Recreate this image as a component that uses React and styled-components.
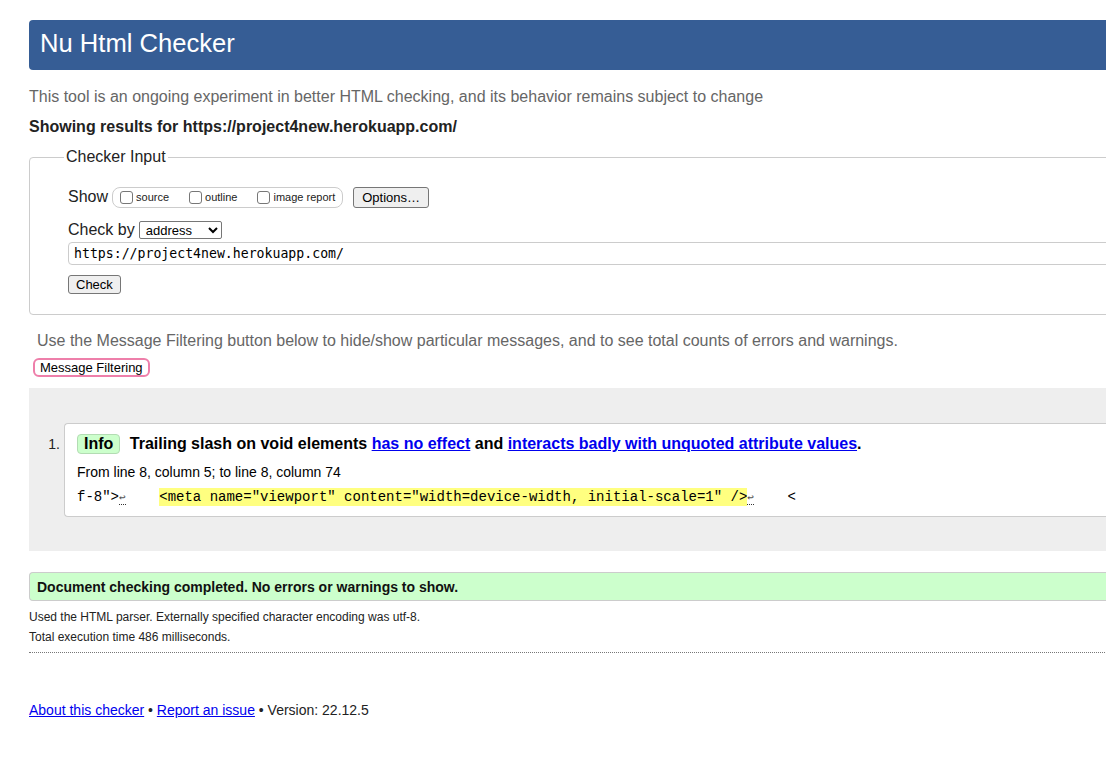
import React from 'react';
import styled, { createGlobalStyle } from 'styled-components';

const GlobalStyle = createGlobalStyle`
  html, body {
    margin: 0;
    overflow: hidden;
    background: #fff;
  }
  body {
    font-family: "Liberation Sans", Arial, sans-serif;
    color: #222;
  }
`;

const Page = styled.div`
  width: 1180px;
  padding: 20px 0 40px 29px;
`;

const Header = styled.h1`
  margin: 0;
  height: 50px;
  line-height: 46px;
  padding-left: 11px;
  background: #365d95;
  color: #fff;
  font-size: 25.6px;
  font-weight: normal;
  border-radius: 4px;
`;

const Intro = styled.p`
  margin: 18px 0 0;
  font-size: 16px;
  line-height: 18px;
  color: #666;
`;

const Target = styled.p`
  margin: 12px 0 0;
  font-size: 16px;
  line-height: 18px;
  font-weight: bold;
  color: #222;
`;

const Fieldset = styled.fieldset`
  margin: 12px 0 0;
  padding: 0 0 20px 38px;
  border: 1px solid #ccc;
  border-radius: 4px;
  min-width: 0;
`;

const Legend = styled.legend`
  padding: 0 2px;
  margin-left: -4px;
  font-size: 16px;
  line-height: 18px;
  color: #222;
`;

const Row = styled.div`
  display: flex;
  align-items: center;
  height: ${({ $h }) => $h}px;
  margin-top: ${({ $mt }) => $mt}px;
  font-size: 16px;
`;

const Group = styled.div`
  display: flex;
  align-items: center;
  box-sizing: border-box;
  height: 21px;
  margin-left: 4px;
  padding: 0 7px 0 7px;
  border: 1px solid #ccc;
  border-radius: 8px;
`;

const Option = styled.label`
  display: flex;
  align-items: center;
  font-size: 11px;
  color: #222;
  & + & {
    margin-left: 20px;
  }
`;

const Box = styled.span`
  display: inline-block;
  box-sizing: border-box;
  width: 13px;
  height: 13px;
  margin-right: 3px;
  border: 1px solid #777;
  border-radius: 3px;
  background: #fff;
`;

const Button = styled.button`
  box-sizing: border-box;
  height: ${({ $h }) => $h || 21}px;
  margin-left: ${({ $ml }) => $ml || 0}px;
  padding: 0 ${({ $px }) => $px || 6}px;
  font-family: "Liberation Sans", Arial, sans-serif;
  font-size: 13px;
  color: #000;
  background: #efefef;
  border: 1px solid #767676;
  border-radius: 3px;
`;

const Select = styled.select`
  box-sizing: border-box;
  width: 83px;
  height: 18px;
  margin-left: 4px;
  padding: 0 0 0 2px;
  font-family: "Liberation Sans", Arial, sans-serif;
  font-size: 13px;
  color: #000;
  background: #fff;
  border: 1px solid #767676;
  border-radius: 2px;
`;

const UrlInput = styled.input`
  display: block;
  box-sizing: border-box;
  width: 1100px;
  height: 23px;
  margin-top: 3px;
  padding: 0 5px;
  font-family: "DejaVu Sans Mono", monospace;
  font-size: 13.2px;
  color: #000;
  border: 1px solid #ccc;
  border-radius: 4px;
  outline: none;
`;

const FilterNote = styled.p`
  margin: 17px 0 0;
  padding-left: 8px;
  font-size: 16px;
  line-height: 18px;
  color: #666;
`;

const FilterButton = styled.button`
  display: block;
  box-sizing: border-box;
  height: 19px;
  margin: 8px 0 0 4px;
  padding: 0 5px;
  font-family: "Liberation Sans", Arial, sans-serif;
  font-size: 13px;
  color: #000;
  background: #fff;
  border: 2px solid #ee7faa;
  border-radius: 6px;
`;

const Results = styled.ol`
  margin: 11px 0 0;
  padding: 35px 0 34px;
  list-style: none;
  background: #eee;
`;

const Item = styled.li`
  display: flex;
  align-items: flex-start;
`;

const Num = styled.span`
  width: 31px;
  padding-right: 4px;
  margin-top: 13px;
  text-align: right;
  font-size: 14px;
  line-height: 16px;
  color: #222;
`;

const Message = styled.div`
  flex: 1;
  padding: 10px 12px;
  background: #fff;
  border: 1px solid #ccc;
  border-right: none;
  border-radius: 4px 0 0 4px;
  color: #000;
`;

const Headline = styled.p`
  margin: 0;
  font-size: 16px;
  line-height: 20px;
  font-weight: bold;
`;

const Badge = styled.strong`
  display: inline-block;
  margin-right: 5px;
  padding: 0 6px;
  line-height: 18px;
  background: #ccffcc;
  border: 1px solid #b3dcb3;
  border-radius: 4px;
`;

const Link = styled.a`
  color: #00e;
  text-decoration: underline;
`;

const Location = styled.p`
  margin: 9px 0 0;
  font-size: 14px;
  line-height: 18px;
`;

const Extract = styled.code`
  display: block;
  margin-top: 7px;
  font-family: "Liberation Mono", "Courier New", monospace;
  font-size: 14px;
  line-height: 18px;
  white-space: pre;
`;

const Mark = styled.mark`
  display: inline-block;
  background: #ffff80;
  color: #000;
`;

const Lf = styled.span`
  display: inline-block;
  font-size: 11px;
  line-height: 12px;
  color: #555;
  border-bottom: 1px dotted #333;
`;

const Done = styled.p`
  box-sizing: border-box;
  height: 29px;
  margin: 21px 0 0;
  padding: 2px 7px 0;
  line-height: 25px;
  font-size: 14px;
  font-weight: bold;
  color: #111;
  background: #ccffcc;
  border: 1px solid #ccc;
  border-right: none;
  border-radius: 4px 0 0 4px;
`;

const Detail = styled.p`
  margin: ${({ $mt }) => $mt}px 0 0;
  font-size: 12px;
  line-height: 20px;
  color: #222;
`;

const Rule = styled.hr`
  margin: 5px 0 0;
  border: none;
  border-top: 1px dotted #777;
`;

const Footer = styled.p`
  margin: 48px 0 0;
  font-size: 14px;
  line-height: 18px;
  color: #222;
`;

export default function App() {
  return (
    <>
      <GlobalStyle />
      <Page>
        <Header>Nu Html Checker</Header>
        <Intro>
          This tool is an ongoing experiment in better HTML checking, and its behavior remains subject to change
        </Intro>
        <Target>Showing results for https://project4new.herokuapp.com/</Target>

        <Fieldset>
          <Legend>Checker Input</Legend>
          <Row $h={22} $mt={20}>
            Show
            <Group>
              <Option><Box />source</Option>
              <Option><Box />outline</Option>
              <Option><Box />image report</Option>
            </Group>
            <Button $ml={10} $px={8}>Options…</Button>
          </Row>
          <Row $h={18} $mt={13}>
            Check by
            <Select defaultValue="address">
              <option value="address">address</option>
              <option value="file">file upload</option>
              <option value="text">text input</option>
            </Select>
          </Row>
          <UrlInput defaultValue="https://project4new.herokuapp.com/" />
          <Row $h={19} $mt={10}>
            <Button $h={19} $px={7}>Check</Button>
          </Row>
        </Fieldset>

        <FilterNote>
          Use the Message Filtering button below to hide/show particular messages, and to see total counts of errors and warnings.
        </FilterNote>
        <FilterButton>Message Filtering</FilterButton>

        <Results>
          <Item>
            <Num>1.</Num>
            <Message>
              <Headline>
                <Badge>Info</Badge> Trailing slash on void elements <Link href="#">has no effect</Link> and{' '}
                <Link href="#">interacts badly with unquoted attribute values</Link>.
              </Headline>
              <Location>From line 8, column 5; to line 8, column 74</Location>
              <Extract>
                {'f-8">'}<Lf>↩</Lf>{'    '}
                <Mark>{'<meta name="viewport" content="width=device-width, initial-scale=1" />'}</Mark>
                <Lf>↩</Lf>{'    <'}
              </Extract>
            </Message>
          </Item>
        </Results>

        <Done>Document checking completed. No errors or warnings to show.</Done>
        <Detail $mt={6}>Used the HTML parser. Externally specified character encoding was utf-8.</Detail>
        <Detail $mt={0}>Total execution time 486 milliseconds.</Detail>
        <Rule />

        <Footer>
          <Link href="#">About this checker</Link> • <Link href="#">Report an issue</Link> • Version: 22.12.5
        </Footer>
      </Page>
    </>
  );
}
